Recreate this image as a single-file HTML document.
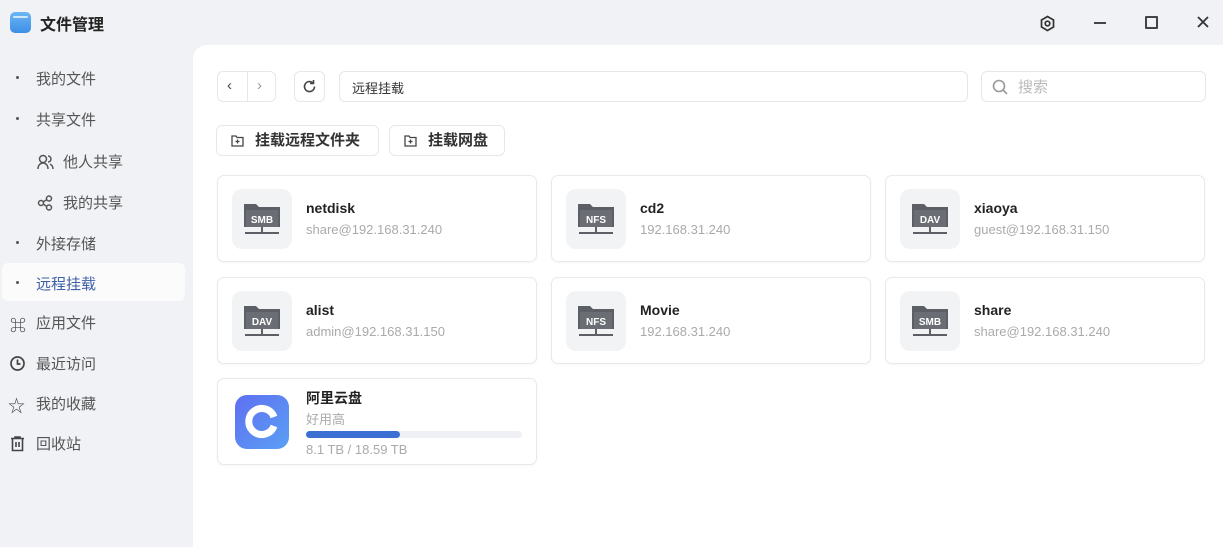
<!DOCTYPE html>
<html><head><meta charset="utf-8"><style>
*{margin:0;padding:0;box-sizing:border-box}
body{width:1223px;height:547px;overflow:hidden;background:#f1f2f5;font-family:"Liberation Sans","Noto Sans CJK SC",sans-serif;position:relative;color:#333}
.abs{position:absolute}
.title{left:40px;top:11px;font-size:16px;font-weight:bold;color:#222}
.logo{left:10px;top:12px;width:21px;height:21px;border-radius:5px;background:linear-gradient(#6cb6f5,#3d8fe6)}
.logo:after{content:"";position:absolute;left:3px;top:4px;width:15px;height:2px;background:#cfe7fb;border-radius:1px}
.nav{font-size:15px;color:#555;left:36px}
.dot{left:16px;width:3px;height:3px;border-radius:50%;background:#555}
.main{left:193px;top:45px;width:1030px;height:502px;background:#fff;border-top-left-radius:14px}
.box{border:1px solid #e6e7ea;border-radius:6px;background:#fff}
.card{width:320px;height:87px;border:1px solid #e8e9ec;border-radius:7px;background:#fff;box-shadow:0 1px 3px rgba(0,0,0,.04)}
.ib{position:absolute;left:14px;top:13px;width:60px;height:60px;border-radius:10px;background:#f2f3f5}
.ib svg{position:absolute;left:10px;top:13px}
.cn{position:absolute;left:88px;top:24px;font-size:14px;font-weight:bold;color:#222}
.cs{position:absolute;left:88px;top:46px;font-size:13px;color:#aaa}
.btn{height:31px;border:1px solid #e6e7ea;border-radius:6px;font-size:15px;font-weight:bold;color:#333;line-height:29px;padding-left:38px}
</style></head><body>
<div class="abs logo"></div>
<div class="abs title">文件管理</div>
<svg class="abs" style="left:1039px;top:15px" width="17" height="17" viewBox="0 0 17 17"><path d="M8.5 1.5l6 3.5v7l-6 3.5-6-3.5V5z" fill="none" stroke="#333" stroke-width="1.7"/><circle cx="8.5" cy="8.5" r="2.3" fill="none" stroke="#333" stroke-width="1.7"/></svg>
<div class="abs" style="left:1094px;top:22px;width:12px;height:2px;background:#444"></div>
<div class="abs" style="left:1145px;top:16px;width:13px;height:13px;border:2px solid #444;border-radius:1px"></div>
<svg class="abs" style="left:1197px;top:16px" width="12" height="12"><path d="M1 1l10 10M11 1L1 11" stroke="#333" stroke-width="1.8"/></svg>

<div class="abs dot" style="top:76px"></div><div class="abs nav" style="top:68px">我的文件</div>
<div class="abs dot" style="top:117px"></div><div class="abs nav" style="top:109px">共享文件</div>
<svg class="abs" style="left:37px;top:154px" width="17" height="16"><circle cx="6" cy="5" r="3.5" fill="none" stroke="#555" stroke-width="1.5"/><path d="M1 15c0-4 2.5-6 5-6s5 2 5 6M11 2a3 3 0 010 6M13 10c2 1 3 3 3 5" fill="none" stroke="#555" stroke-width="1.5"/></svg>
<div class="abs nav" style="top:151px;left:63px">他人共享</div>
<svg class="abs" style="left:37px;top:195px" width="16" height="16"><circle cx="4" cy="8" r="2.5" fill="none" stroke="#555" stroke-width="1.5"/><circle cx="12" cy="3.5" r="2.5" fill="none" stroke="#555" stroke-width="1.5"/><circle cx="12" cy="12.5" r="2.5" fill="none" stroke="#555" stroke-width="1.5"/><path d="M6 7l4-2.5M6 9l4 2.5" stroke="#555" stroke-width="1.5"/></svg>
<div class="abs nav" style="top:192px;left:63px">我的共享</div>
<div class="abs dot" style="top:241px"></div><div class="abs nav" style="top:233px">外接存储</div>
<div class="abs" style="left:2px;top:263px;width:183px;height:38px;background:#fbfbfc;border-radius:6px"></div>
<div class="abs dot" style="top:281px"></div><div class="abs nav" style="top:273px;color:#3d5fa8">远程挂载</div>
<div class="abs" style="left:10px;top:312px;font-size:16px;color:#444;font-weight:bold">⌘</div><div class="abs nav" style="top:312px">应用文件</div>
<svg class="abs" style="left:9px;top:355px" width="17" height="17"><circle cx="8.5" cy="8.5" r="6.5" fill="none" stroke="#444" stroke-width="1.7"/><path d="M8.5 4.5v4.5h3" fill="none" stroke="#444" stroke-width="1.7"/></svg><div class="abs nav" style="top:353px">最近访问</div>
<div class="abs" style="left:8px;top:392px;font-size:17px;color:#444">☆</div><div class="abs nav" style="top:393px">我的收藏</div>
<svg class="abs" style="left:10px;top:436px" width="15" height="16"><path d="M1 2.5h13M5 2.5V1h5v1.5M2.5 2.5v12h10v-12M6 6v5M9 6v5" fill="none" stroke="#444" stroke-width="1.6"/></svg><div class="abs nav" style="top:433px">回收站</div>

<div class="abs main"></div>
<div class="abs box" style="left:217px;top:71px;width:59px;height:31px"><div class="abs" style="left:29px;top:0;width:1px;height:29px;background:#e6e7ea"></div><span class="abs" style="left:9px;top:5px;font-size:15px;color:#444">‹</span><span class="abs" style="left:39px;top:5px;font-size:15px;color:#999">›</span></div>
<div class="abs box" style="left:294px;top:71px;width:31px;height:31px"><svg class="abs" style="left:7px;top:7px" width="15" height="15"><path d="M12.5 7.5a5 5 0 1 1-1.8-3.8" fill="none" stroke="#444" stroke-width="1.6"/><path d="M11.5 1v3.5H8" fill="none" stroke="#444" stroke-width="1.6"/></svg></div>
<div class="abs box" style="left:339px;top:71px;width:629px;height:31px;font-size:13px;color:#333;padding:6px 12px">远程挂载</div>
<div class="abs box" style="left:981px;top:71px;width:225px;height:31px;font-size:15px;color:#bbb;padding:4px 36px"><svg class="abs" style="left:10px;top:7px" width="17" height="17"><circle cx="7" cy="7" r="5.5" fill="none" stroke="#999" stroke-width="1.6"/><path d="M11 11l4 4" stroke="#999" stroke-width="1.6"/></svg>搜索</div>
<div class="abs btn" style="left:216px;top:125px;width:163px"><svg class="abs" style="left:14px;top:9px" width="13" height="12"><path d="M1 1h4l1 1.5h6V11H1z" fill="none" stroke="#444" stroke-width="1.3"/><path d="M6.5 4.5v4M4.5 6.5h4" stroke="#444" stroke-width="1.3"/></svg>挂载远程文件夹</div>
<div class="abs btn" style="left:389px;top:125px;width:116px"><svg class="abs" style="left:14px;top:9px" width="13" height="12"><path d="M1 1h4l1 1.5h6V11H1z" fill="none" stroke="#444" stroke-width="1.3"/><path d="M6.5 4.5v4M4.5 6.5h4" stroke="#444" stroke-width="1.3"/></svg>挂载网盘</div>

<div class="abs card" style="left:217px;top:175px"><div class="ib"><svg width="40" height="36"><path d="M2 2h12l3 3h21v20H2z" fill="#5c5f66"/><rect x="4" y="8" width="32" height="17" fill="#6a6d74"/><text x="20" y="21" font-size="10" font-weight="bold" fill="#fff" text-anchor="middle" font-family="Liberation Sans">SMB</text><path d="M20 25v6M3 31h34" stroke="#5c5f66" stroke-width="2"/></svg></div><div class="cn">netdisk</div><div class="cs">share@192.168.31.240</div></div>
<div class="abs card" style="left:551px;top:175px"><div class="ib"><svg width="40" height="36"><path d="M2 2h12l3 3h21v20H2z" fill="#5c5f66"/><rect x="4" y="8" width="32" height="17" fill="#6a6d74"/><text x="20" y="21" font-size="10" font-weight="bold" fill="#fff" text-anchor="middle" font-family="Liberation Sans">NFS</text><path d="M20 25v6M3 31h34" stroke="#5c5f66" stroke-width="2"/></svg></div><div class="cn">cd2</div><div class="cs">192.168.31.240</div></div>
<div class="abs card" style="left:885px;top:175px"><div class="ib"><svg width="40" height="36"><path d="M2 2h12l3 3h21v20H2z" fill="#5c5f66"/><rect x="4" y="8" width="32" height="17" fill="#6a6d74"/><text x="20" y="21" font-size="10" font-weight="bold" fill="#fff" text-anchor="middle" font-family="Liberation Sans">DAV</text><path d="M20 25v6M3 31h34" stroke="#5c5f66" stroke-width="2"/></svg></div><div class="cn">xiaoya</div><div class="cs">guest@192.168.31.150</div></div>
<div class="abs card" style="left:217px;top:277px"><div class="ib"><svg width="40" height="36"><path d="M2 2h12l3 3h21v20H2z" fill="#5c5f66"/><rect x="4" y="8" width="32" height="17" fill="#6a6d74"/><text x="20" y="21" font-size="10" font-weight="bold" fill="#fff" text-anchor="middle" font-family="Liberation Sans">DAV</text><path d="M20 25v6M3 31h34" stroke="#5c5f66" stroke-width="2"/></svg></div><div class="cn">alist</div><div class="cs">admin@192.168.31.150</div></div>
<div class="abs card" style="left:551px;top:277px"><div class="ib"><svg width="40" height="36"><path d="M2 2h12l3 3h21v20H2z" fill="#5c5f66"/><rect x="4" y="8" width="32" height="17" fill="#6a6d74"/><text x="20" y="21" font-size="10" font-weight="bold" fill="#fff" text-anchor="middle" font-family="Liberation Sans">NFS</text><path d="M20 25v6M3 31h34" stroke="#5c5f66" stroke-width="2"/></svg></div><div class="cn">Movie</div><div class="cs">192.168.31.240</div></div>
<div class="abs card" style="left:885px;top:277px"><div class="ib"><svg width="40" height="36"><path d="M2 2h12l3 3h21v20H2z" fill="#5c5f66"/><rect x="4" y="8" width="32" height="17" fill="#6a6d74"/><text x="20" y="21" font-size="10" font-weight="bold" fill="#fff" text-anchor="middle" font-family="Liberation Sans">SMB</text><path d="M20 25v6M3 31h34" stroke="#5c5f66" stroke-width="2"/></svg></div><div class="cn">share</div><div class="cs">share@192.168.31.240</div></div>
<div class="abs card" style="left:217px;top:378px">
<div class="abs" style="left:17px;top:16px;width:54px;height:54px;border-radius:12px;background:linear-gradient(135deg,#5f6ff0,#5aa0f5)"><svg class="abs" style="left:9px;top:9px" width="36" height="36"><path d="M30 22A13 13 0 1 1 30 13" fill="none" stroke="#fff" stroke-width="7"/></svg></div>
<div class="cn" style="top:9px">阿里云盘</div><div class="cs" style="top:30px">好用高</div>
<div class="abs" style="left:88px;top:52px;width:216px;height:7px;border-radius:4px;background:#eef0f3"><div style="width:94px;height:7px;border-radius:4px;background:#3b6fd1"></div></div>
<div class="cs" style="top:63px">8.1 TB / 18.59 TB</div></div>
</body></html>
